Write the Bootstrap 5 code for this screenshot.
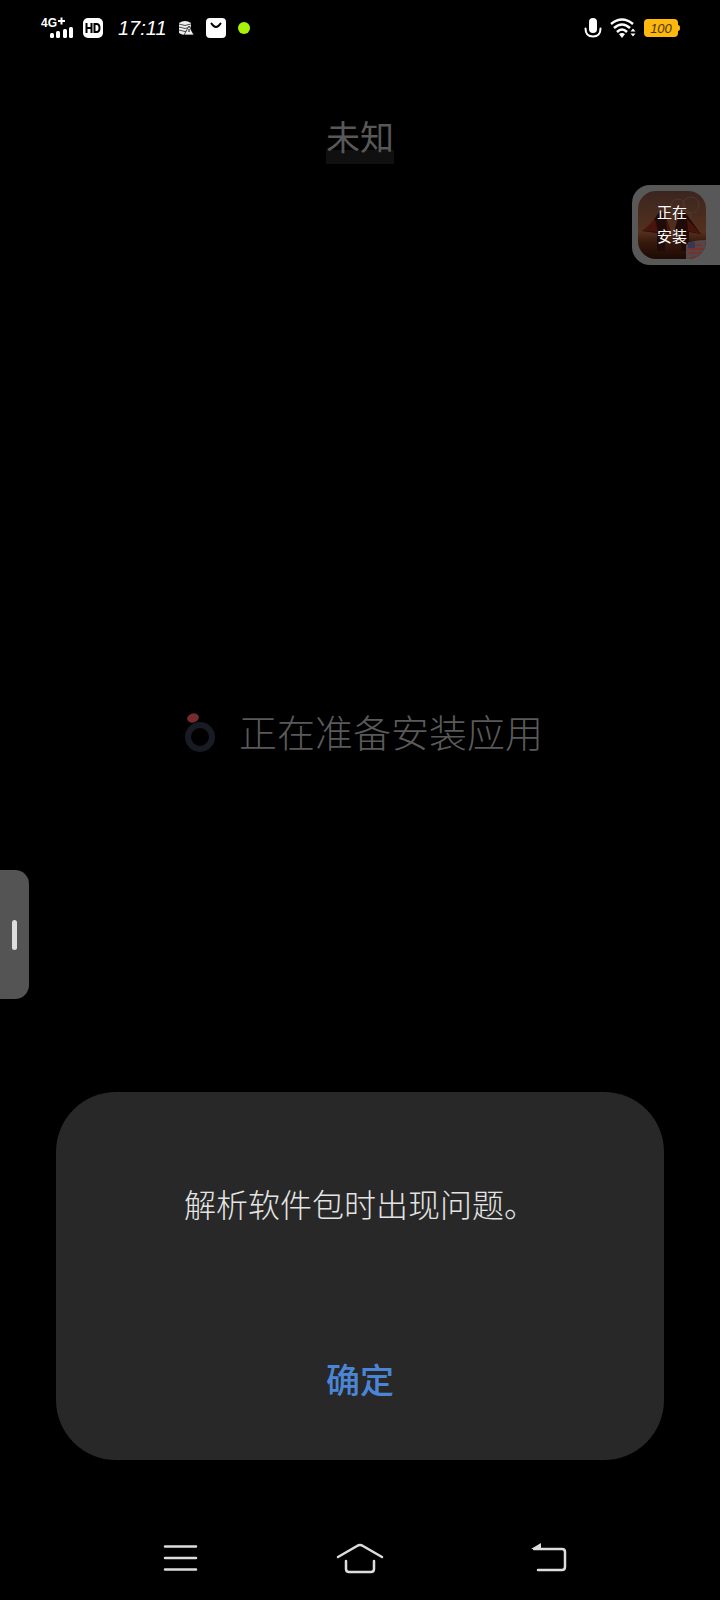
<!DOCTYPE html>
<html lang="zh-CN">
<head>
<meta charset="utf-8">
<meta name="viewport" content="width=device-width, initial-scale=1">
<title>安装应用</title>
<link rel="stylesheet" href="https://cdn.jsdelivr.net/npm/bootstrap@5.3.0/dist/css/bootstrap.min.css">
<style>
body{background:#000;color:#fff;font-family:"Liberation Sans","Noto Sans CJK SC",sans-serif;font-weight:300}
svg{display:block;flex:none}
.status-bar{height:56px;padding:0 40px}
.clock{font:italic 400 20px/28px "Liberation Sans",sans-serif;margin-left:14px;margin-right:12px}
.status-gap{margin-left:12px}
.camera-dot{width:12px;height:12px;background:#a6f20a}
.screen-title{font-size:34px;line-height:36px;font-weight:400;color:#585858;padding-bottom:8px;background:linear-gradient(#101010,#101010) bottom/100% 14px no-repeat}
.stage{padding-top:204px;padding-left:8px}
.loading-text{font-size:38px;line-height:44px;color:#5a5a5a}
.dialog-card{background:#282828;border-radius:60px;margin:0 56px 56px;padding:90px 24px 46px}
.message{font-size:32px;line-height:48px;color:#e4e4e4;margin-bottom:118px}
.confirm{font-size:34px;line-height:54px;font-weight:500;color:#4b86d6;padding:6px 60px}
.nav-keys{height:84px;padding:0 138px}
.nav-keys button{background:none;width:84px;height:84px}
.side-handle{top:870px;left:0;width:29px;height:129px;background:#545454;border-radius:0 14px 14px 0;padding-right:12px}
.side-handle i{width:5px;height:30px;background:#ddd}
.float-app{top:185px;right:0;width:88px;height:80px;background:#585858;border-radius:18px 0 0 18px;padding:6px}
.thumb{width:68px;height:68px;border-radius:18px}
.thumb-label{inset:0;font-size:15px;line-height:24px;font-weight:400;color:#fff}
</style>
<script src="https://cdn.jsdelivr.net/npm/bootstrap@5.3.0/dist/js/bootstrap.bundle.min.js"></script>
</head>
<body>
<div class="d-flex flex-column min-vh-100 position-relative overflow-hidden">
  <div class="status-bar d-flex align-items-center justify-content-between">
    <div class="d-flex align-items-center">
      <svg width="34" height="24" viewBox="0 0 34 24" fill="#fff"><text x="1" y="11" font-family="Liberation Sans" font-size="12" font-weight="700">4G</text><path d="M18 5h7M21.500 1.500v7" stroke="#fff" stroke-width="2"/><rect x="10" y="17" width="4" height="5" rx="1.500"/><rect x="16" y="15" width="4" height="7" rx="1.500"/><rect x="23" y="13" width="4" height="9" rx="1.500"/><rect x="29" y="11" width="4" height="11" rx="1.500"/></svg>
      <svg class="ms-2" width="22" height="20" viewBox="0 0 22 20"><rect x="1" width="20" height="20" rx="5" fill="#fff"/><path d="M4.500 5v10M9.500 5v10M4.500 10h5M12.500 6v8h2q3 0 3-4t-3-4z" fill="none" stroke="#000" stroke-width="2"/></svg>
      <span class="clock">17:11</span>
      <svg width="15" height="14" viewBox="0 0 15 14"><path d="M0 2q6-4 12 0v10q-6 4-12 0z" fill="#eee"/><path d="M0 3q6 3 12 0M0 6q6 3 12 0M0 9q6 3 12 0" fill="none" stroke="#000" stroke-width=".7"/><path d="M10 5l5 9H5z" fill="#eee" stroke="#000" stroke-width=".7"/><path d="M10 8v3" stroke="#000"/></svg>
      <svg class="status-gap" width="20" height="20" viewBox="0 0 20 20"><rect width="20" height="20" rx="4" fill="#fff"/><path d="M5.500 5.500q4.500 7 9 0" fill="none" stroke="#000" stroke-width="2" stroke-linecap="round"/></svg>
      <span class="camera-dot status-gap rounded-circle"></span>
    </div>
    <div class="d-flex align-items-center gap-2">
      <svg width="18" height="20" viewBox="0 0 18 20"><rect x="5" width="8" height="15" rx="4" fill="#fff"/><path d="M1.500 10.500q0 8 7.500 8t7.500-8" fill="none" stroke="#fff" stroke-width="2" stroke-linecap="round"/></svg>
      <svg width="26" height="20" viewBox="0 0 26 20"><g fill="none" stroke="#fff" stroke-width="2.500"><path d="M1 6q11-9 22 0M4 10q8-7 16 0M7 14q5-5 10 0"/></g><path d="M9 16q3-2 6 0l-3 4zM20.500 13.500l2.500-3 2.500 3zM20.500 15.500l2.500 3 2.500-3z" fill="#fff"/></svg>
      <svg width="36" height="20" viewBox="0 0 36 20"><rect y="1" width="34" height="18" rx="4" fill="#ffb80d"/><path d="M34 7q2 0 2 3t-2 3z" fill="#ffb80d"/><text x="17" y="15" text-anchor="middle" font-family="Liberation Sans" font-style="italic" font-size="13" fill="#4a3500">100</text></svg>
    </div>
  </div>

  <header class="d-flex justify-content-center pt-5 pb-2"><h1 class="screen-title mt-3 mb-0">未知</h1></header>

  <main class="stage flex-grow-1 d-flex align-items-center justify-content-center">
    <div class="d-flex align-items-center gap-4" role="status">
      <svg width="30" height="42" viewBox="0 0 30 42"><circle cx="15" cy="24" r="12" fill="none" stroke="#181b24" stroke-width="6"/><ellipse cx="8" cy="5" rx="6" ry="4.500" fill="#752b30" transform="rotate(-18 8 5)"/></svg>
      <span class="loading-text">正在准备安装应用</span>
    </div>
  </main>

  <section class="dialog-card text-center" role="alertdialog" aria-labelledby="message">
    <p class="message" id="message">解析软件包时出现问题。</p>
    <button type="button" class="confirm btn border-0">确定</button>
  </section>

  <nav class="nav-keys d-flex justify-content-between align-items-center">
    <button type="button" class="border-0 p-0 d-flex justify-content-center align-items-center" aria-label="最近任务"><svg width="36" height="30" viewBox="0 0 36 30" stroke="#ddd" stroke-width="2.500" stroke-linecap="round"><path d="M3 3.500h31M3 15h31M3 26.500h31"/></svg></button>
    <button type="button" class="border-0 p-0 d-flex justify-content-center align-items-center" aria-label="主屏幕"><svg width="48" height="32" viewBox="0 0 48 32" fill="none" stroke="#ddd" stroke-width="2.500" stroke-linecap="round"><path d="M2 15L21 4q3-2 6 0l19 11M10 19v8q0 3 3 3h22q3 0 3-3v-8"/></svg></button>
    <button type="button" class="border-0 p-0 d-flex justify-content-center align-items-center" aria-label="返回"><svg width="54" height="32" viewBox="-18 0 54 32"><path d="M3 7h28q3 0 3 3v15q0 3-3 3H7" fill="none" stroke="#ddd" stroke-width="2.500" stroke-linecap="round"/><path d="M0 7l10-6v6z" fill="#ddd"/></svg></button>
  </nav>

  <div class="side-handle position-absolute d-flex align-items-center justify-content-end"><i class="rounded-pill"></i></div>

  <div class="float-app position-absolute">
    <div class="thumb position-relative overflow-hidden">
      <svg width="68" height="68" viewBox="0 0 68 68"><defs><linearGradient id="dusk" x2="0" y2="1"><stop stop-color="#3b2520"/><stop offset=".6" stop-color="#54301d"/><stop offset=".75" stop-color="#38190d"/><stop offset="1" stop-color="#1c0b06"/></linearGradient></defs><rect width="68" height="68" fill="url(#dusk)"/><g fill="none" stroke="#4d3833"><circle cx="40" cy="15" r="7"/><circle cx="53" cy="14" r="8"/><circle cx="47" cy="26" r="6"/></g><path d="M19 24q4-7 8 0l6 17-3 3-3-4v20h-8V42L4 40q8-4 15-16zM41 24q4-7 8 0l14 19-12-2v19h-8V43l-7-2z" fill="#210b08"/><path d="M17 28l3 13-15-1zM49 28l14 15-13-3zM28 28l5 13-4-2z" fill="#49140e"/><path d="M48 54q5-5 20-5v19H48z" fill="#544746"/><path d="M51 54h12M50 58h16M51 62h13M54 66h8" stroke="#78302f" stroke-width="2"/><path d="M50 51h7v6h-7z" fill="#343951"/></svg>
      <div class="thumb-label position-absolute d-flex flex-column align-items-center justify-content-center"><span>正在</span><span>安装</span></div>
    </div>
  </div>
</div>
</body>
</html>
